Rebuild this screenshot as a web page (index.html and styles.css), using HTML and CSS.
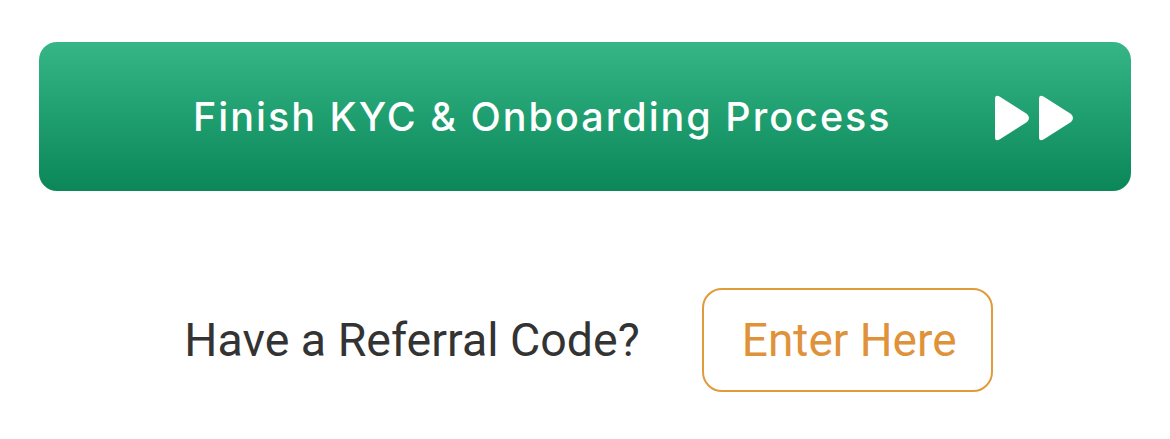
FILE: index.html
```html
<!DOCTYPE html>
<html>
<head>
<meta charset="utf-8">
<link rel="stylesheet" href="styles.css">
</head>
<body>
<div class="page">
  <button class="cta">
    <span class="cta-label">Finish KYC &amp; Onboarding Process</span>
    <svg class="cta-icon" width="82" height="50" viewBox="0 0 82 50">
      <path d="M4 6 Q4 1 8.5 3.5 L36 21 Q40 25 36 29 L8.5 46.5 Q4 49 4 44 Z" fill="#fff"/>
      <path d="M48 6 Q48 1 52.5 3.5 L80 21 Q84 25 80 29 L52.5 46.5 Q48 49 48 44 Z" fill="#fff"/>
    </svg>
  </button>
  <div class="referral">
    <span class="referral-text">Have a Referral Code?</span>
    <button class="enter-btn">Enter Here</button>
  </div>
</div>
</body>
</html>
```

FILE: styles.css
```css
html, body {
  margin: 0;
  padding: 0;
  background: #ffffff;
}
.page {
  width: 1170px;
  height: 439px;
  padding: 42px 39px 0 39px;
  box-sizing: border-box;
  display: flex;
  flex-direction: column;
}
.cta {
  height: 149px;
  border: none;
  border-radius: 18px;
  background: linear-gradient(180deg, #36b687 0%, #1f9e6f 50%, #0b8759 100%);
  display: flex;
  align-items: center;
  justify-content: space-between;
  padding: 0 58px 0 154px;
  box-sizing: border-box;
  cursor: pointer;
}
.cta-label {
  font-family: Inter, sans-serif;
  font-weight: 500;
  font-size: 39.5px;
  color: #ffffff;
  letter-spacing: 2px;
}
.cta-icon {
  display: block;
  margin-top: 2px;
}
.referral {
  margin-top: 97px;
  display: flex;
  align-items: center;
  justify-content: center;
  gap: 62px;
  padding-left: 7px;
}
.referral-text {
  font-family: Roboto, sans-serif;
  font-size: 46.5px;
  color: #333333;
}
.enter-btn {
  width: 291px;
  height: 104px;
  border: 2.5px solid #e19a3c;
  border-radius: 20px;
  background: #ffffff;
  font-family: Roboto, sans-serif;
  font-size: 46px;
  color: #e0923a;
  padding: 0 0 0 4px;
  box-sizing: border-box;
}
```
